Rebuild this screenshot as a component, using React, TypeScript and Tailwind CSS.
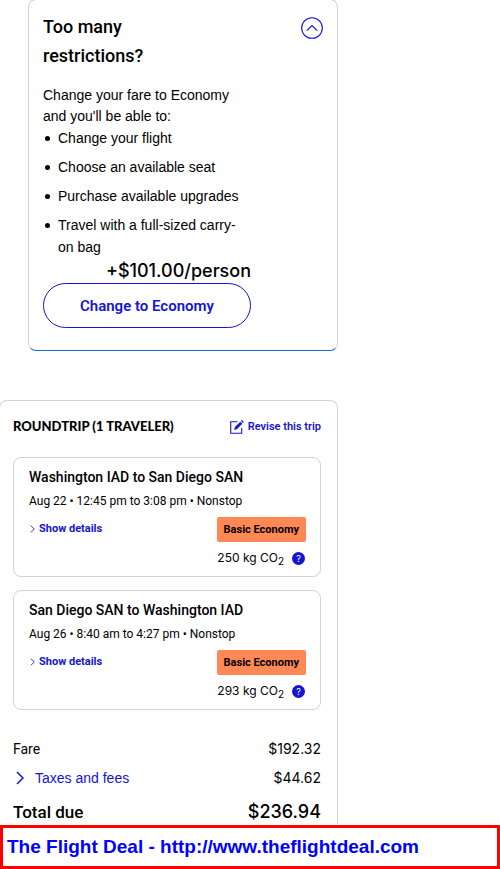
import React, { useState } from 'react';

const perks = [
  'Change your flight',
  'Choose an available seat',
  'Purchase available upgrades',
  'Travel with a full-sized carry-on bag',
];

const flights = [
  {
    id: 'outbound',
    route: 'Washington IAD to San Diego SAN',
    schedule: 'Aug 22 • 12:45 pm to 3:08 pm • Nonstop',
    cabin: 'Basic Economy',
    emissions: '250',
  },
  {
    id: 'return',
    route: 'San Diego SAN to Washington IAD',
    schedule: 'Aug 26 • 8:40 am to 4:27 pm • Nonstop',
    cabin: 'Basic Economy',
    emissions: '293',
  },
];

type Flight = (typeof flights)[number];

function ChevronRight({ className }: { className: string }) {
  return (
    <svg viewBox="0 0 8 14" fill="none" stroke="currentColor" strokeWidth="1.5" className={className} aria-hidden="true">
      <path d="M1 1l6 6-6 6" />
    </svg>
  );
}

function FareUpsell() {
  const [open, setOpen] = useState(true);

  return (
    <section className="-mt-px ml-7 flex max-w-[310px] items-start justify-between rounded-lg border border-[#d3d3d3] border-b-[#1668e3] px-3.5 pt-3 pb-[22px]">
      <div className="w-52">
        <h2 className="w-32 text-[18px] leading-[29px] font-medium">Too many restrictions?</h2>
        {open && (
          <>
            <p className="mt-[15px] font-['Liberation_Sans',Arial,sans-serif] text-[14px] leading-[21px]">
              Change your fare to Economy and you'll be able to:
            </p>
            <ul className="flex flex-col gap-[7px] font-['Liberation_Sans',Arial,sans-serif] text-[14px] leading-[22px]">
              {perks.map((perk) => (
                <li key={perk} className="flex gap-2">
                  <span className="ml-[2px] mt-[9px] size-[5px] shrink-0 rounded-full bg-black" />
                  <span>{perk}</span>
                </li>
              ))}
            </ul>
            <p className="text-right font-['Inter',sans-serif] text-[18px] leading-[25px] font-medium">+$101.00/person</p>
            <button type="button" className="h-[45px] w-full rounded-full border border-[#1414d2] pt-px text-[15px] font-semibold text-[#1414d2]">
              Change to Economy
            </button>
          </>
        )}
      </div>
      <button type="button" aria-label="Toggle fare details" onClick={() => setOpen(!open)} className="mt-[5px] text-[#1414d2]">
        <svg viewBox="0 0 22 22" fill="none" stroke="currentColor" className="size-[22px]">
          <circle cx="11" cy="11" r="10.3" strokeWidth="1.1" />
          <path d="M5.8 13.6L11 8.6l5.2 5" strokeWidth="1.2" />
        </svg>
      </button>
    </section>
  );
}

function FlightCard({ flight }: { flight: Flight }) {
  return (
    <article className="rounded-lg border border-[#d3d3d3] pt-[7px] pr-3.5 pb-[7px] pl-[15px]">
      <h3 className="text-[14px] leading-6 font-medium">{flight.route}</h3>
      <p className="text-[12px] leading-6">{flight.schedule}</p>
      <div className="mt-1 flex items-start justify-between">
        <button type="button" className="flex h-6 items-center gap-1 text-[11px] font-bold text-[#1414d2]">
          <ChevronRight className="ml-px h-2 w-[5px]" />
          Show details
        </button>
        <div className="flex flex-col items-end gap-[5px]">
          <span className="rounded-xs bg-[#ff8855] px-[7px] pt-px text-[11px] leading-6 font-bold">{flight.cabin}</span>
          <div className="flex h-[22px] items-center gap-2 font-['Inter',sans-serif] text-[12px]">
            <span>
              {flight.emissions} kg CO<sub className="text-[10px]">2</sub>
            </span>
            <button type="button" aria-label="About emissions" className="mr-px size-[13px] rounded-full bg-[#1414d2] text-[9px] leading-[13px] text-white">
              ?
            </button>
          </div>
        </div>
      </div>
    </article>
  );
}

function TripSummary() {
  return (
    <section className="mt-[49px] -ml-px max-w-[339px] rounded-t-lg border border-b-0 border-[#d3d3d3] pt-3.5 pr-4 pl-[13px]">
      <div className="flex h-6 items-center justify-between">
        <h2 className="font-['Lato',sans-serif] text-[13px] font-black">ROUNDTRIP (1 TRAVELER)</h2>
        <a href="#revise" className="flex items-center gap-1 text-[11px] font-semibold text-[#1414d2]">
          <svg viewBox="0 0 14 14" fill="none" stroke="currentColor" className="size-3.5" aria-hidden="true">
            <path d="M7.5 1.8H.7v11.5h11V8" strokeWidth="1.1" />
            <path d="M4.2 10l.7-2.9L10.3 1.7l2 2-5.4 5.5z" fill="currentColor" stroke="none" />
            <path d="M11 1.1l1-1 1.9 1.9-1 1z" fill="currentColor" stroke="none" />
          </svg>
          Revise this trip
        </a>
      </div>
      <div className="mt-[18px] flex flex-col gap-[13px]">
        {flights.map((flight) => (
          <FlightCard key={flight.id} flight={flight} />
        ))}
      </div>
      <dl className="mt-[27px] font-['Inter',sans-serif] text-[14px] leading-6">
        <div className="flex justify-between">
          <dt className="font-['Roboto',sans-serif]">Fare</dt>
          <dd>$192.32</dd>
        </div>
        <div className="mt-[5px] flex justify-between">
          <dt>
            <button type="button" className="flex items-center gap-[11px] font-['Liberation_Sans',Arial,sans-serif] text-[14px] text-[#1414d2]">
              <ChevronRight className="ml-[3px] h-3.5 w-2" />
              Taxes and fees
            </button>
          </dt>
          <dd>$44.62</dd>
        </div>
        <div className="mt-2.5 flex justify-between text-[18px] font-medium">
          <dt className="font-['Roboto',sans-serif] text-[17px]">Total due</dt>
          <dd>$236.94</dd>
        </div>
      </dl>
    </section>
  );
}

export default function App() {
  return (
    <div className="bg-white font-['Roboto',sans-serif] text-black">
      <main className="flow-root pb-px">
        <FareUpsell />
        <TripSummary />
      </main>
      <footer className="border-[3px] border-[#ff0000] px-1 font-['Liberation_Sans',Arial,sans-serif] text-[19px] leading-[38px] font-bold">
        <a href="http://www.theflightdeal.com" className="text-[#0000ff]">
          The Flight Deal - http://www.theflightdeal.com
        </a>
      </footer>
    </div>
  );
}
